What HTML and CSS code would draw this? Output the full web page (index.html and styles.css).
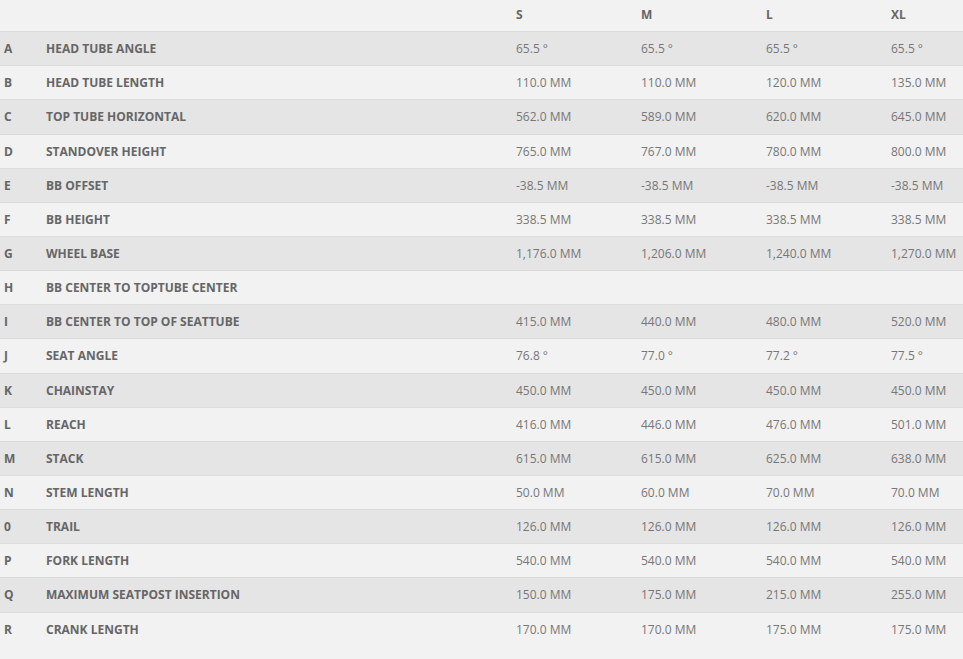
FILE: index.html
```html
<!DOCTYPE html>
<html>
<head>
<meta charset="utf-8">
<link rel="stylesheet" href="styles.css">
</head>
<body>
<table class="geo">
<colgroup>
<col class="c-letter"><col class="c-label"><col class="c-size"><col class="c-size"><col class="c-size"><col class="c-last">
</colgroup>
<thead>
<tr><th></th><th></th><th>S</th><th>M</th><th>L</th><th>XL</th></tr>
</thead>
<tbody>
<tr><th>A</th><th>HEAD TUBE ANGLE</th><td>65.5 °</td><td>65.5 °</td><td>65.5 °</td><td>65.5 °</td></tr>
<tr><th>B</th><th>HEAD TUBE LENGTH</th><td>110.0 MM</td><td>110.0 MM</td><td>120.0 MM</td><td>135.0 MM</td></tr>
<tr><th>C</th><th>TOP TUBE HORIZONTAL</th><td>562.0 MM</td><td>589.0 MM</td><td>620.0 MM</td><td>645.0 MM</td></tr>
<tr><th>D</th><th>STANDOVER HEIGHT</th><td>765.0 MM</td><td>767.0 MM</td><td>780.0 MM</td><td>800.0 MM</td></tr>
<tr><th>E</th><th>BB OFFSET</th><td>-38.5 MM</td><td>-38.5 MM</td><td>-38.5 MM</td><td>-38.5 MM</td></tr>
<tr><th>F</th><th>BB HEIGHT</th><td>338.5 MM</td><td>338.5 MM</td><td>338.5 MM</td><td>338.5 MM</td></tr>
<tr><th>G</th><th>WHEEL BASE</th><td>1,176.0 MM</td><td>1,206.0 MM</td><td>1,240.0 MM</td><td>1,270.0 MM</td></tr>
<tr><th>H</th><th>BB CENTER TO TOPTUBE CENTER</th><td></td><td></td><td></td><td></td></tr>
<tr><th>I</th><th>BB CENTER TO TOP OF SEATTUBE</th><td>415.0 MM</td><td>440.0 MM</td><td>480.0 MM</td><td>520.0 MM</td></tr>
<tr><th>J</th><th>SEAT ANGLE</th><td>76.8 °</td><td>77.0 °</td><td>77.2 °</td><td>77.5 °</td></tr>
<tr><th>K</th><th>CHAINSTAY</th><td>450.0 MM</td><td>450.0 MM</td><td>450.0 MM</td><td>450.0 MM</td></tr>
<tr><th>L</th><th>REACH</th><td>416.0 MM</td><td>446.0 MM</td><td>476.0 MM</td><td>501.0 MM</td></tr>
<tr><th>M</th><th>STACK</th><td>615.0 MM</td><td>615.0 MM</td><td>625.0 MM</td><td>638.0 MM</td></tr>
<tr><th>N</th><th>STEM LENGTH</th><td>50.0 MM</td><td>60.0 MM</td><td>70.0 MM</td><td>70.0 MM</td></tr>
<tr><th>0</th><th>TRAIL</th><td>126.0 MM</td><td>126.0 MM</td><td>126.0 MM</td><td>126.0 MM</td></tr>
<tr><th>P</th><th>FORK LENGTH</th><td>540.0 MM</td><td>540.0 MM</td><td>540.0 MM</td><td>540.0 MM</td></tr>
<tr><th>Q</th><th>MAXIMUM SEATPOST INSERTION</th><td>150.0 MM</td><td>175.0 MM</td><td>215.0 MM</td><td>255.0 MM</td></tr>
<tr><th>R</th><th>CRANK LENGTH</th><td>170.0 MM</td><td>170.0 MM</td><td>175.0 MM</td><td>175.0 MM</td></tr>
</tbody>
</table>
</body>
</html>
```
FILE: styles.css
```css
html, body {
  margin: 0;
  padding: 0;
  background: #f2f2f2;
}
body {
  font-family: "Open Sans", "Liberation Sans", sans-serif;
  font-size: 12px;
  line-height: 1.42857;
  color: #666;
}
.geo {
  width: 963px;
  border-collapse: collapse;
  table-layout: fixed;
}
.c-letter { width: 42px; }
.c-label { width: 470px; }
.c-size { width: 125px; }
.c-last { width: 76px; }
.geo th, .geo td {
  padding: 8px 4px;
  text-align: left;
  vertical-align: middle;
  white-space: nowrap;
}
.geo th { font-weight: 700; color: #666; }
.geo td { font-weight: 400; color: #777; }
.geo thead th {
  height: 15px;
  padding-top: 6px;
  padding-bottom: 8px;
  border-bottom: 1px solid #dcdcdc;
}
.geo tbody tr { border-bottom: 1px solid #dcdcdc; }
.geo tbody tr:last-child { border-bottom: 0; }
.geo tbody tr:nth-child(odd) { background: #e5e5e5; }
```
